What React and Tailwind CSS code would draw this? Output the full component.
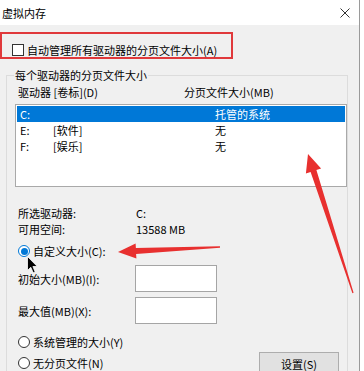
// Virtual memory dialog (Windows 10 style), with red annotation arrows
function Radio({ checked }) {
  return (
    <span
      className={
        checked
          ? 'w-[12px] h-[12px] shrink-0 rounded-full border border-[#0078d7] bg-white flex items-center justify-center'
          : 'w-[12px] h-[12px] shrink-0 rounded-full border border-[#333333] bg-white'
      }
    >
      {checked && <span className="w-[7px] h-[7px] rounded-full bg-[#0078d7]" />}
    </span>
  );
}

const drives = [
  { letter: 'C:', label: '', size: '托管的系统', selected: true },
  { letter: 'E:', label: '[软件]', size: '无' },
  { letter: 'F:', label: '[娱乐]', size: '无' },
];

export default function App() {
  return (
    <div className="relative w-[364px] h-[371px] overflow-hidden bg-white font-['Noto_Sans_CJK_SC','Noto_Sans',sans-serif] text-[11px] leading-[16px] text-black">
      <div className="w-[360px] h-full border-r border-[#9a9a9a] bg-[#f0f0f0] flex flex-col">
        {/* title bar */}
        <div className="h-[25px] shrink-0 bg-white flex items-center justify-between pl-[2px] pr-[9px]">
          <span>虚拟内存</span>
          <svg width="10" height="10" viewBox="0 0 10 10">
            <path d="M0.5 0.5 L9.5 9.5 M9.5 0.5 L0.5 9.5" stroke="#333" strokeWidth="1" />
          </svg>
        </div>

        {/* auto manage checkbox, highlighted */}
        <div className="mt-[7px] w-[233px] h-[27px] shrink-0 border-2 border-[#e0393b] pl-[10px] pt-[9px] flex items-start gap-[3px]">
          <span className="mt-[1px] w-[12px] h-[12px] shrink-0 border border-[#333333] bg-white" />
          <span className="leading-[14px] whitespace-nowrap">自动管理所有驱动器的分页文件大小(A)</span>
        </div>

        {/* per-drive group */}
        <fieldset className="mt-[8px] ml-[6px] w-[342px] shrink-0 border border-[#dcdcdc] pl-[8px] pb-[10px]">
          <legend className="-ml-[1px] px-[1px]">每个驱动器的分页文件大小</legend>

          <div className="mt-[1px] pl-[3px] grid grid-cols-[166px_1fr]">
            <span>驱动器 [卷标](D)</span>
            <span>分页文件大小(MB)</span>
          </div>

          <div className="mt-[4px] h-[83px] border border-[#a9a9a9] bg-white p-[1px]">
            {drives.map((d) => (
              <div
                key={d.letter}
                className={
                  d.selected
                    ? 'h-[16px] pl-[3px] grid grid-cols-[33px_162px_1fr] bg-[#0078d7] text-white'
                    : 'h-[16px] pl-[3px] grid grid-cols-[33px_162px_1fr]'
                }
              >
                <span>{d.letter}</span>
                <span>{d.label}</span>
                <span>{d.size}</span>
              </div>
            ))}
          </div>

          <div className="mt-[18px] pl-[3px] grid grid-cols-[118px_1fr]">
            <span>所选驱动器:</span>
            <span>C:</span>
            <span>可用空间:</span>
            <span>13588 MB</span>
          </div>

          <div className="mt-[6px] pl-[3px] flex items-center gap-[3px]">
            <Radio checked />
            <span>自定义大小(C):</span>
          </div>

          <div className="mt-[6px] pl-[3px] flex items-center">
            <span className="w-[117px]">初始大小(MB)(I):</span>
            <div className="w-[82px] h-[27px] border border-[#a5a5a5] bg-white" />
          </div>
          <div className="mt-[5px] pl-[3px] flex items-center">
            <span className="w-[117px]">最大值(MB)(X):</span>
            <div className="w-[82px] h-[27px] border border-[#a5a5a5] bg-white" />
          </div>

          <div className="mt-[10px] pl-[3px] flex items-center gap-[3px]">
            <Radio />
            <span>系统管理的大小(Y)</span>
          </div>

          <div className="mt-[2px] pl-[3px] flex items-start justify-between">
            <div className="mt-[3px] flex items-center gap-[3px]">
              <Radio />
              <span>无分页文件(N)</span>
            </div>
            <button className="mr-[8px] w-[80px] h-[24px] border border-[#adadad] bg-[#e1e1e1] flex items-center justify-center">
              设置(S)
            </button>
          </div>
        </fieldset>
      </div>

      {/* red annotation arrows */}
      <svg className="absolute inset-0 pointer-events-none" width="364" height="371" viewBox="0 0 364 371">
        <polygon points="308,154 321.1,168.5 316.4,170.1 353.6,292.8 352.4,293.2 310.6,171.9 305.9,173.5" fill="#e8302f" />
        <polygon points="118,252 135.6,243.6 135.9,248.1 220,246.3 220,247.7 136.1,254.1 136.4,258.6" fill="#e8302f" />
      </svg>

      {/* mouse cursor */}
      <svg className="absolute left-[27px] top-[256px] pointer-events-none" width="12" height="18" viewBox="0 0 12 18">
        <polygon points="0.5,0.5 0.5,14.5 3.8,11.3 6.2,16.8 8.2,15.9 5.9,10.5 10.3,10.5" fill="#000" stroke="#fff" strokeWidth="0.8" />
      </svg>
    </div>
  );
}
